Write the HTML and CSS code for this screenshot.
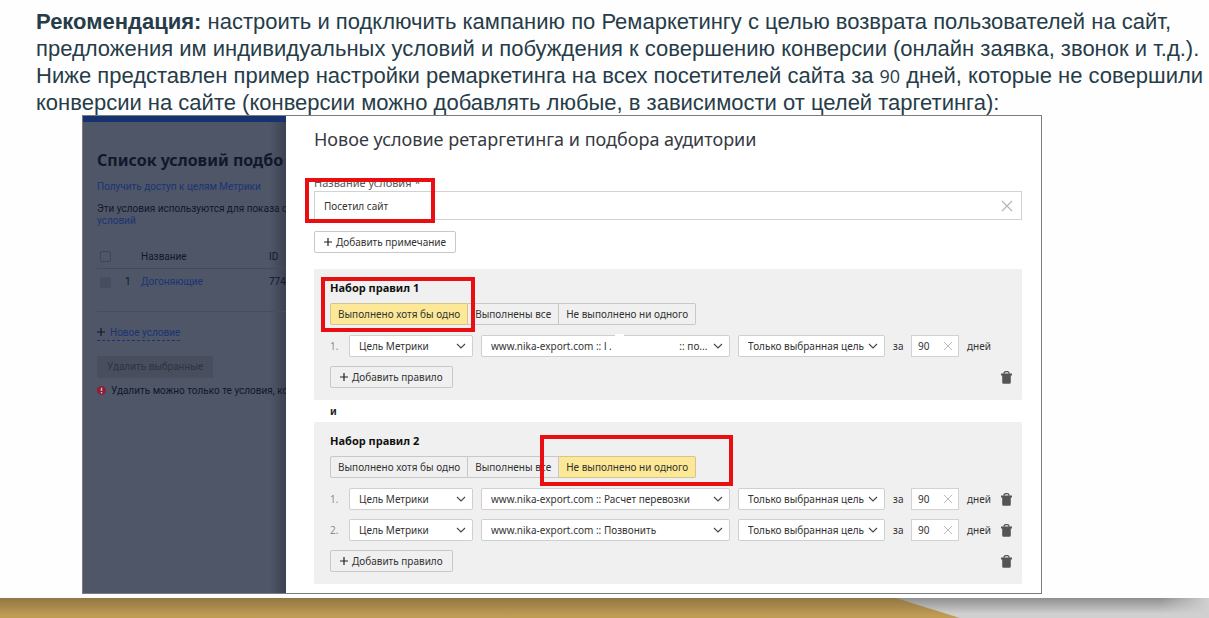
FILE: index.html
```html
<!DOCTYPE html>
<html lang="ru">
<head>
<meta charset="utf-8">
<title>Ремаркетинг</title>
<link rel="stylesheet" href="styles.css">
</head>
<body>
<svg width="0" height="0" class="defs" aria-hidden="true">
  <symbol id="chevron" viewBox="0 0 10 6"><path d="M1 1l4 4 4-4" fill="none" stroke="#444" stroke-width="1.1"/></symbol>
  <symbol id="cross" viewBox="0 0 12 12"><path d="M1 1l10 10M11 1L1 11" fill="none" stroke="#b4b4b4" stroke-width="1.1"/></symbol>
  <symbol id="plus" viewBox="0 0 8 8"><path d="M4 0v8M0 4h8" fill="none" stroke="currentColor" stroke-width="1.2"/></symbol>
  <symbol id="trash" viewBox="0 0 11 13"><path d="M3 2.800Q3 .7 4.800.7h1.400Q8 .7 8 2.800" fill="none" stroke="#555" stroke-width="1.300"/><path d="M0 2.400h11v2H0zM1.200 4.400h8.600v7q0 1.400-1.400 1.400H2.600q-1.400 0-1.400-1.400z" fill="#555"/></symbol>
</svg>
<main class="slide">
  <p class="lead"><b>Рекомендация:</b> настроить и подключить кампанию по Ремаркетингу с целью возврата пользователей на сайт,<br>предложения им индивидуальных условий и побуждения к совершению конверсии (онлайн заявка, звонок и т.д.).<br>Ниже представлен пример настройки ремаркетинга на всех посетителей сайта за <span class="num">90</span> дней, которые не совершили<br>конверсии на сайте (конверсии можно добавлять любые, в зависимости от целей таргетинга):</p>

  <div class="frame">
    <aside class="side">
      <h2 class="side-title">Список условий подбо</h2>
      <a class="side-link" href="#">Получить доступ к целям Метрики</a>
      <p class="side-text">Эти условия используются для показа о<br><a href="#">условий</a></p>
      <table class="list">
        <thead><tr><th class="c-check"><input type="checkbox" aria-label="Выбрать все"></th><th class="c-num"></th><th class="c-name">Название</th><th>ID</th></tr></thead>
        <tbody><tr><td><input type="checkbox" class="off" disabled aria-label="Выбрать Догоняющие"></td><td>1</td><td><a href="#">Догоняющие</a></td><td>774</td></tr></tbody>
      </table>
      <a class="new" href="#"><svg class="plus"><use href="#plus"/></svg>Новое условие</a>
      <button class="remove" disabled>Удалить выбранные</button>
      <p class="warn"><svg class="alert" viewBox="0 0 10 10"><circle cx="5" cy="5" r="5" fill="#8d1f38"/><path d="M5 2v3.600M5 6.800v1.400" stroke="#c9c3cc" stroke-width="1.500"/></svg>Удалить можно только те условия, ко</p>
    </aside>

    <section class="dialog">
      <h1 class="title">Новое условие ретаргетинга и подбора аудитории</h1>
      <div class="field">
        <label class="label" for="name">Название условия *</label>
        <div class="box">
          <input id="name" type="text" value="Посетил сайт">
          <button class="clear" aria-label="Очистить"><svg><use href="#cross"/></svg></button>
        </div>
        <span class="mark mark-name"></span>
      </div>
      <button class="btn"><svg class="plus"><use href="#plus"/></svg>Добавить примечание</button>

      <div class="set first">
        <h3>Набор правил 1</h3>
        <div class="tabs"><button class="on">Выполнено хотя бы одно</button><button>Выполнены все</button><button>Не выполнено ни одного</button></div>
        <span class="mark mark-any"></span>
        <div class="rule">
          <span class="no">1.</span>
          <span class="pick"><select aria-label="Тип"><option>Цель Метрики</option></select><svg><use href="#chevron"/></svg></span>
          <span class="pick"><select aria-label="Цель"><option>www.nika-export.com :: l .&nbsp;&nbsp;&nbsp;&nbsp;&nbsp;&nbsp;&nbsp;&nbsp;&nbsp;&nbsp;&nbsp;&nbsp;&nbsp;&nbsp;&nbsp;&nbsp;&nbsp;&nbsp;&nbsp;&nbsp;&nbsp;&nbsp;&nbsp;&nbsp;&nbsp;&nbsp;:: по...</option></select><svg><use href="#chevron"/></svg><i class="smudge"></i></span>
          <span class="pick"><select aria-label="Охват"><option>Только выбранная цель</option></select><svg><use href="#chevron"/></svg></span>
          <label for="d1">за</label>
          <span class="days"><input id="d1" type="text" value="90"><button class="clear" aria-label="Очистить"><svg><use href="#cross"/></svg></button></span>
          <span>дней</span>
        </div>
        <div class="foot"><button class="btn"><svg class="plus"><use href="#plus"/></svg>Добавить правило</button><button class="trash" aria-label="Удалить набор"><svg><use href="#trash"/></svg></button></div>
      </div>

      <div class="and">и</div>

      <div class="set">
        <h3>Набор правил 2</h3>
        <div class="tabs"><button>Выполнено хотя бы одно</button><button>Выполнены все</button><button class="on">Не выполнено ни одного</button></div>
        <span class="mark mark-none"></span>
        <div class="rule">
          <span class="no">1.</span>
          <span class="pick"><select aria-label="Тип"><option>Цель Метрики</option></select><svg><use href="#chevron"/></svg></span>
          <span class="pick"><select aria-label="Цель"><option>www.nika-export.com :: Расчет перевозки</option></select><svg><use href="#chevron"/></svg></span>
          <span class="pick"><select aria-label="Охват"><option>Только выбранная цель</option></select><svg><use href="#chevron"/></svg></span>
          <label for="d2">за</label>
          <span class="days"><input id="d2" type="text" value="90"><button class="clear" aria-label="Очистить"><svg><use href="#cross"/></svg></button></span>
          <span>дней</span>
          <button class="trash" aria-label="Удалить правило"><svg><use href="#trash"/></svg></button>
        </div>
        <div class="rule">
          <span class="no">2.</span>
          <span class="pick"><select aria-label="Тип"><option>Цель Метрики</option></select><svg><use href="#chevron"/></svg></span>
          <span class="pick"><select aria-label="Цель"><option>www.nika-export.com :: Позвонить</option></select><svg><use href="#chevron"/></svg></span>
          <span class="pick"><select aria-label="Охват"><option>Только выбранная цель</option></select><svg><use href="#chevron"/></svg></span>
          <label for="d3">за</label>
          <span class="days"><input id="d3" type="text" value="90"><button class="clear" aria-label="Очистить"><svg><use href="#cross"/></svg></button></span>
          <span>дней</span>
          <button class="trash" aria-label="Удалить правило"><svg><use href="#trash"/></svg></button>
        </div>
        <div class="foot"><button class="btn"><svg class="plus"><use href="#plus"/></svg>Добавить правило</button><button class="trash" aria-label="Удалить набор"><svg><use href="#trash"/></svg></button></div>
      </div>
    </section>
  </div>
  <div class="band"><div class="gold"></div></div>
</main>
</body>
</html>
```
FILE: styles.css
```css
* { box-sizing: border-box; }
body { margin: 0; background: #fefefe; font-family: "Noto Sans", "Open Sans", sans-serif; font-size: 10px; line-height: 16px; color: #333; }
h1, h2, h3, p { margin: 0; }
h1, h2, h3 { font-family: "Noto Sans", "Open Sans", sans-serif; }
button, input, select { font: inherit; color: inherit; margin: 0; }
button { padding: 0; border: 0; background: none; white-space: nowrap; }
.defs { position: absolute; }
.slide { min-height: 100vh; display: flex; flex-direction: column; }

.lead { padding: 8px 0 1px 36px; font: 22px/27px "Liberation Sans", Arial, sans-serif; color: #263c48; white-space: nowrap; }
.num { font-family: "Open Sans", sans-serif; font-size: 18px; line-height: 1; }

.frame { margin: -2px 167px 4px 82px; border: 1px solid #7a7d80; display: flex; background: #fff; }

.side { flex: none; width: 203px; padding: 28px 0 0 14px; overflow: hidden; white-space: nowrap; font-family: Roboto, "Noto Sans", sans-serif; color: #10182b; border-top: 6px solid #17336f; background: linear-gradient(90deg, transparent 92%, #3c4252), #4f5667; display: flex; flex-direction: column; align-items: flex-start; }
.side a { color: #1a3474; text-decoration: none; }
.side-title { font-size: 16px; line-height: 20px; }
.side-link { margin-top: 9px; }
.side-text { margin-top: 8px; line-height: 12px; }
.list { width: 100%; margin-top: 19px; border-collapse: collapse; table-layout: fixed; }
.list th, .list td { padding: 0; text-align: left; font-weight: 400; height: 22px; border-bottom: 1px solid #434a5b; }
.list td { height: 43px; padding-top: 5px; vertical-align: top; border-color: #474e5f; }
.c-check { width: 28px; }
.c-num { width: 16px; }
.c-name { width: 128px; }
.list input { appearance: none; display: block; width: 11px; height: 11px; margin-left: 3px; border: 1px solid #3e4555; border-radius: 2px; }
.list td input { margin-top: 3px; background: #474d5d; border-color: #474d5d; }
.new { margin-top: 13px; display: flex; align-items: center; gap: 5px; border-bottom: 1px dashed #1a3474; line-height: 15px; }
.new .plus { color: #10182b; }
.remove { margin-top: 15px; height: 22px; padding: 0 10px; background: #484e5e; color: #2d3443; }
.warn { margin-top: 5px; display: flex; align-items: center; gap: 5px; }
.alert { width: 9px; height: 9px; flex: none; }

.dialog { flex: 1; min-width: 0; padding: 11px 19px 9px 28px; }
.title { font-size: 18px; line-height: 24px; font-weight: 400; color: #35393f; }
.field { position: relative; margin: 24px 0 11px; }
.label { display: block; font-size: 11px; line-height: 16px; color: #555; }
.box { display: flex; align-items: center; height: 29px; border: 1px solid #d2d2d2; padding: 0 8px 0 9px; }
.box input, .days input { flex: 1; min-width: 0; border: 0; padding: 0; background: none; outline: 0; }
.clear svg { display: block; width: 12px; height: 12px; }
.btn { display: flex; align-items: center; gap: 4px; height: 22px; padding: 0 9px; border: 1px solid #c8c8c8; border-radius: 2px; }
.plus { width: 8px; height: 8px; flex: none; color: #222; }

.set { position: relative; padding: 10px 9px 12px 16px; background: #f0f0f0; border-radius: 1px; }
.first { margin-top: 16px; }
.set h3 { font-size: 11px; line-height: 18px; color: #111; }
.tabs { display: flex; margin: 6px 0 10px; }
.tabs button { height: 22px; padding: 0 7px; border: 1px solid #c8c8c8; }
.tabs button + button { border-left: 0; }
.tabs button:first-child { border-radius: 2px 0 0 2px; }
.tabs button:last-child { border-radius: 0 2px 2px 0; }
.tabs .on { background: #fce896; border-color: #d3c68c; }
.rule { display: grid; grid-template-columns: 11px minmax(0, 124fr) minmax(0, 249fr) minmax(0, 147fr) 10px 48px 26px 12px; column-gap: 8px; align-items: center; margin-bottom: 9px; }
.no { color: #8c8c8c; }
.pick { position: relative; display: flex; }
.pick select { appearance: none; width: 100%; height: 22px; padding: 0 18px 0 9px; border: 1px solid #cfcfcf; border-radius: 2px; background: #fff; }
.pick svg { position: absolute; right: 7px; top: 8px; width: 10px; height: 6px; pointer-events: none; }
.smudge { position: absolute; left: 134px; top: -1px; width: 9px; height: 3px; background: #fff; }
.days { display: flex; align-items: center; height: 22px; padding: 0 5px 0 6px; border: 1px solid #d2d2d2; background: #fff; }
.days .clear svg { width: 10px; height: 10px; }
.foot { display: flex; justify-content: space-between; align-items: center; padding-right: 1px; }
.trash svg { display: block; width: 11px; height: 13px; }
.and { padding-left: 16px; line-height: 22px; font-weight: 700; color: #222; }

.mark { position: absolute; border: 4px solid #e80e12; pointer-events: none; }
.mark-name { left: -9px; top: 3px; width: 130px; height: 45px; }
.mark-any { left: 7px; top: 8px; width: 154px; height: 55px; }
.mark-none { left: 226px; top: 13px; width: 193px; height: 51px; }

.band { flex: 1; min-height: 20px; background: linear-gradient(90deg, transparent 96%, #d0d0d0), linear-gradient(#8f8f8f, #d0d0d0 80%); }
.gold { height: 100%; min-height: 20px; background: linear-gradient(#927743, #c09c55 90%); clip-path: polygon(0 0, 74.1% 0, 79.4% 100%, 0 100%); }
```
